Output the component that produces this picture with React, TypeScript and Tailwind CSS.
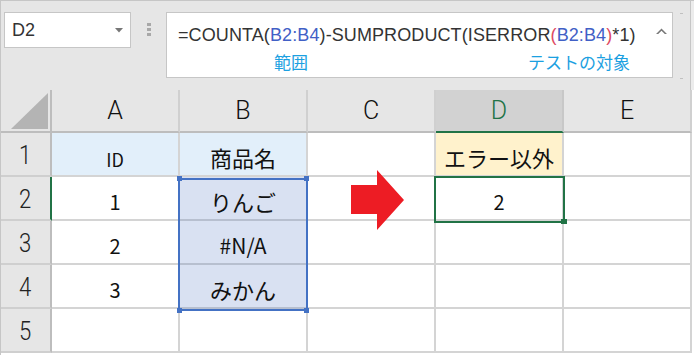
import React from "react";

const F = { fontFamily: '"Noto Sans CJK JP", "Noto Sans", sans-serif' };
const R = { fontFamily: 'Roboto, "Noto Sans", sans-serif' };
const L = { fontFamily: '"Liberation Sans", Arial, "Noto Sans CJK JP", sans-serif' };

function HeaderCell({ label, active }: { label: string; active?: boolean }) {
  return (
    <div
      className={
        "h-[43px] flex items-center justify-center border-r-2 border-b text-[25px] font-light leading-none " +
        (active
          ? "bg-[#d2d2d2] text-[#217346] border-r-[#c8c8c8] border-b-[#217346] border-b-2"
          : "bg-[#e6e6e6] text-[#111] border-r-[#d0d0d0] border-b-[#bdbdbd] border-b-2")
      }
      style={R}
    >
      {label}
    </div>
  );
}

function RowHead({ n, active }: { n: number; active?: boolean }) {
  return (
    <div
      className={
        "h-[44px] bg-[#e6e6e6] flex items-center justify-center border-b-2 border-b-[#cfcfcf] border-r-2 " +
        (active ? "border-r-[#217346]" : "border-r-[#bdbdbd]")
      }
    >
      <span className="text-[26px] font-light leading-none text-[#222] scale-x-85 pt-[2px]" style={R}>
        {n}
      </span>
    </div>
  );
}

function Cell({
  children,
  bg = "bg-white",
  size = "text-[20px]",
  line = "border-[#d4d4d4]",
}: {
  children?: React.ReactNode;
  bg?: string;
  size?: string;
  line?: string;
}) {
  return (
    <div
      className={
        "h-[44px] flex items-end justify-center pb-[7px] border-r-2 border-b-2 leading-none text-[#111] " +
        bg +
        " " +
        size +
        " " +
        line
      }
      style={F}
    >
      {children}
    </div>
  );
}

export default function App() {
  return (
    <div className="relative w-[694px] h-[355px] overflow-hidden bg-white">
      <div className="w-[694px] h-[355px] border-l border-t border-[#c6c6c6] flex flex-col">
        {/* toolbar */}
        <div className="h-[89px] bg-[#e6e6e6] flex items-start shrink-0">
          <div className="ml-[3px] mt-[11px] w-[127px] h-[36px] bg-white border border-[#c6c6c6] flex items-center justify-between pl-[7px] pr-[7px]">
            <span className="text-[18px] leading-none text-[#333]" style={L}>
              D2
            </span>
            <svg width="8" height="5" viewBox="0 0 8 5">
              <path d="M0 0 H8 L4 4.5 Z" fill="#777" />
            </svg>
          </div>
          <div className="w-[35px] h-full flex flex-col items-center pt-[22px] gap-[2px]">
            <div className="w-[4px] h-[3px] bg-[#a8a8a8]" />
            <div className="w-[4px] h-[3px] bg-[#a8a8a8]" />
            <div className="w-[4px] h-[3px] bg-[#a8a8a8]" />
          </div>
          <div className="mt-[11px] w-[507px] h-[66px] bg-white border border-[#c6c6c6] flex">
            <div className="flex-1 flex flex-col pl-[11px] pt-[13px]">
              <div className="text-[18px] leading-none text-[#333] whitespace-nowrap tracking-[0.1px]" style={L}>
                =COUNTA(<span className="text-[#4160c6]">B2:B4</span>)-SUMPRODUCT(ISERROR
                <span className="text-[#de4a63]">(</span>
                <span className="text-[#4160c6]">B2:B4</span>
                <span className="text-[#de4a63]">)</span>*1)
              </div>
              <div className="flex mt-[9px] text-[17px] leading-none text-[#1ba0e1]" style={F}>
                <span className="ml-[96px]">範囲</span>
                <span className="ml-[220px]">テストの対象</span>
              </div>
            </div>
            <div className="w-[22px] flex justify-center pt-[15px]">
              <svg width="11" height="7" viewBox="0 0 11 7">
                <path d="M0 6 L5.5 0.5 L11 6 L8.8 6 L5.5 2.8 L2.2 6 Z" fill="#777" />
              </svg>
            </div>
          </div>
          <div className="w-[17px] h-full flex flex-col items-center pt-[12px]">
            <div className="w-[3px] h-[1px] bg-[#c0c0c0]" />
            <div className="w-[3px] h-[1px] bg-[#c0c0c0] mt-[64px]" />
          </div>
          <div className="w-[1px] h-full bg-[#c6c6c6]" />
          <div className="flex-1 h-full bg-[#ececec]" />
        </div>

        {/* grid */}
        <div className="grid grid-cols-[51px_128px_128px_128px_128px_128px]">
          {/* header row */}
          <div className="h-[43px] bg-[#e6e6e6] border-r-2 border-b-2 border-[#bdbdbd] flex items-end justify-end pr-[2px] pb-[2px]">
            <svg width="37" height="36" viewBox="0 0 37 36">
              <path d="M37 0 V36 H0 Z" fill="#b4b4b4" />
            </svg>
          </div>
          <HeaderCell label="A" />
          <HeaderCell label="B" />
          <HeaderCell label="C" />
          <HeaderCell label="D" active />
          <HeaderCell label="E" />

          {/* row 1 */}
          <RowHead n={1} />
          <Cell bg="bg-[#e2effa]" size="text-[18px]">ID</Cell>
          <Cell bg="bg-[#e2effa]" size="text-[22px]">商品名</Cell>
          <Cell />
          <Cell bg="bg-[#fff2cc]" size="text-[22px]">エラー以外</Cell>
          <Cell />

          {/* row 2 */}
          <RowHead n={2} active />
          <Cell>1</Cell>
          <Cell bg="bg-[#d9e1f2]" size="text-[22px]" line="border-[#b7bfcf]">りんご</Cell>
          <Cell />
          <Cell>2</Cell>
          <Cell />

          {/* row 3 */}
          <RowHead n={3} />
          <Cell>2</Cell>
          <Cell bg="bg-[#d9e1f2]" size="text-[21px]" line="border-[#b7bfcf]">#N/A</Cell>
          <Cell />
          <Cell />
          <Cell />

          {/* row 4 */}
          <RowHead n={4} />
          <Cell>3</Cell>
          <Cell bg="bg-[#d9e1f2]" size="text-[22px]" line="border-[#b7bfcf]">みかん</Cell>
          <Cell />
          <Cell />
          <Cell />

          {/* row 5 */}
          <RowHead n={5} />
          <Cell />
          <Cell />
          <Cell />
          <Cell />
          <Cell />
        </div>
      </div>

      {/* selection B2:B4 */}
      <div className="absolute left-[178px] top-[178px] w-[130px] h-[133px] border-2 border-[#4472c4]" />
      <div className="absolute left-[177px] top-[176px] w-[5px] h-[5px] bg-[#4472c4]" />
      <div className="absolute left-[304px] top-[176px] w-[5px] h-[5px] bg-[#4472c4]" />
      <div className="absolute left-[177px] top-[308px] w-[5px] h-[5px] bg-[#4472c4]" />
      <div className="absolute left-[304px] top-[308px] w-[5px] h-[5px] bg-[#4472c4]" />

      {/* active cell D2 */}
      <div className="absolute left-[434px] top-[176px] w-[131px] h-[47px] border-2 border-[#217346]" />
      <div className="absolute left-[561px] top-[219px] w-[6px] h-[5px] bg-[#217346]" />

      {/* arrow */}
      <svg className="absolute left-[351px] top-[170px]" width="53" height="60" viewBox="0 0 53 60">
        <polygon points="0,15 26,15 26,0 53,30 26,60 26,44 0,44" fill="#ed1c24" />
      </svg>
    </div>
  );
}
